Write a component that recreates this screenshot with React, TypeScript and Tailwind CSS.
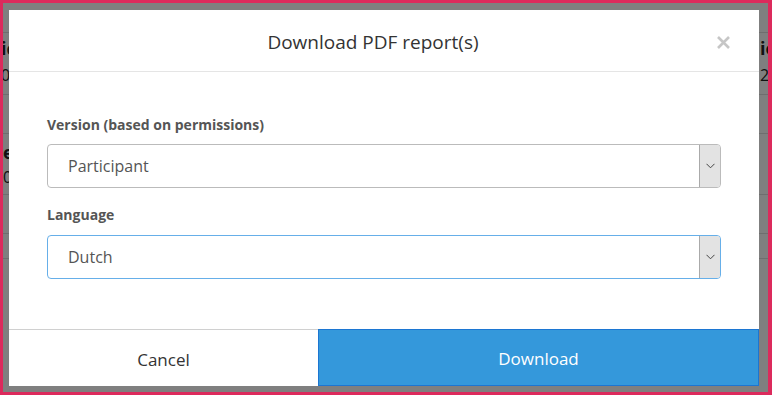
import React from "react";

function Chevron() {
  return (
    <svg width="9" height="6" viewBox="0 0 9 6" fill="none">
      <polyline points="0.5,0.8 4.5,4.8 8.5,0.8" stroke="#444" strokeWidth="1" />
    </svg>
  );
}

function Select({ value, focused }: { value: string; focused?: boolean }) {
  return (
    <div
      className={
        "flex h-[44px] w-full items-stretch rounded-[4px] border bg-white " +
        (focused ? "border-[#66afe9]" : "border-[#bbbbbb]")
      }
    >
      <div className="flex flex-1 items-center pl-[20px] text-[16px] text-[#555555]">{value}</div>
      <div className="flex w-[21px] items-center justify-center rounded-r-[3px] border-l border-[#aaaaaa] bg-[#e3e3e3]">
        <Chevron />
      </div>
    </div>
  );
}

export default function App() {
  return (
    <div
      className="relative h-[395px] w-[772px] overflow-hidden border-t-[3px] border-r-4 border-b-[3px] border-l-[3px] border-[#dc2a5c] bg-white"
      style={{ fontFamily: '"Open Sans", "Noto Sans", sans-serif' }}
    >
      {/* background table */}
      <div className="flex flex-col text-[#222]">
        <div className="h-[30px] border-b border-[#dddddd]" />
        <div className="flex h-[62px] justify-between border-b border-[#dddddd] pt-[3px]">
          <div className="-ml-[2px] flex flex-col">
            <span className="text-[18px] font-bold leading-[24px]">ic</span>
            <span className="text-[16px] leading-[30px]">01</span>
          </div>
          <div className="flex w-[8px] shrink-0 flex-col whitespace-nowrap">
            <span className="text-[18px] font-bold leading-[24px]">ie</span>
            <span className="text-[16px] leading-[30px]">20</span>
          </div>
        </div>
        <div className="h-[39px] border-b border-[#dddddd]" />
        <div className="flex h-[61px] justify-between border-b border-[#dddddd] pt-[6px]">
          <div className="flex flex-col">
            <span className="text-[18px] font-bold leading-[24px]">er</span>
            <span className="text-[16px] leading-[26px]">0</span>
          </div>
          <div />
        </div>
        <div className="h-[39px] border-b border-[#dddddd]" />
        <div className="h-[25px] border-b border-[#dddddd]" />
      </div>

      {/* overlay */}
      <div className="absolute inset-0 bg-black/50" />

      {/* modal */}
      <div className="absolute left-[6px] top-[7px] flex h-[376px] w-[750px] flex-col bg-white">
        <div className="relative flex h-[62px] items-center justify-center border-b border-[#e5e5e5] pr-[22px] pt-[4px]">
          <span className="text-[19px] text-[#333333]">Download PDF report(s)</span>
          <svg
            className="absolute right-[29px] top-[26px]"
            width="13"
            height="13"
            viewBox="0 0 13 13"
          >
            <path d="M1 1 L12 12 M12 1 L1 12" stroke="#c6c6c6" strokeWidth="2.6" />
          </svg>
        </div>
        <div className="flex flex-col px-[38px] pt-[43px]">
          <label className="mb-[9px] text-[14px] font-bold leading-[20px] text-[#555555]">
            Version (based on permissions)
          </label>
          <Select value="Participant" />
          <label className="mb-[10px] mt-[17px] text-[14px] font-bold leading-[20px] text-[#555555]">
            Language
          </label>
          <Select value="Dutch" focused />
        </div>
        <div className="mt-auto flex h-[57px]">
          <button className="w-[309px] border-t border-[#d0d0d0] bg-white pt-[3px] text-[17px] text-[#333333]">
            Cancel
          </button>
          <button className="flex-1 border border-[#1c76d2] bg-[#3498db] pt-[3px] text-[17px] text-white">
            Download
          </button>
        </div>
      </div>
    </div>
  );
}
